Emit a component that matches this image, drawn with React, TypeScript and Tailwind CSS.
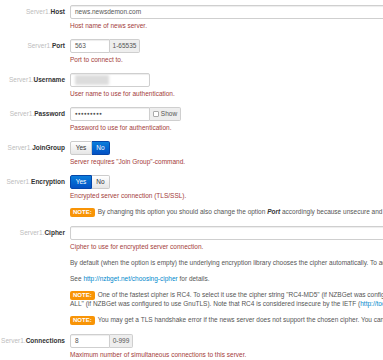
import React from "react";

const help = "mt-[3px] leading-[8px] text-[#a33c3a] whitespace-nowrap";
const desc = "mt-[8px] leading-[8px] text-[#555] whitespace-nowrap";
const box =
  "h-[14px] border border-[#cfcfcf] bg-white shadow-[inset_0_1px_1px_rgba(0,0,0,0.075)] flex items-center px-[4px] text-[#555]";
const addon =
  "h-[14px] border border-l-0 border-[#cfcfcf] bg-[#eeeeee] rounded-r-[2px] flex items-center justify-center text-[#555]";

function Row({ name, children }: { name: string; children: React.ReactNode }) {
  return (
    <div className="flex mb-[9px]">
      <div className="w-[65px] shrink-0 h-[14px] flex items-center justify-end whitespace-nowrap">
        <span className="text-[#bcbcbc]">Server1.</span>
        <span className="font-bold text-[#333]">{name}</span>
      </div>
      <div className="ml-[5px] flex flex-col items-start">{children}</div>
    </div>
  );
}

function Note() {
  return (
    <span className="inline-block bg-[#f89406] text-white font-bold rounded-[2px] px-[3px] h-[9px] leading-[9px] text-[6px] mr-[3px] align-middle relative -top-[0.5px]">
      NOTE:
    </span>
  );
}

function Switch({ yes }: { yes: boolean }) {
  const on = "bg-linear-to-b from-[#0b7ddb] to-[#0551c4] text-white border-[#0546a8]";
  const off = "bg-linear-to-b from-white to-[#e6e6e6] text-[#333] border-[#cccccc]";
  return (
    <div className="flex h-[14px]">
      <div
        className={`w-[22px] h-full border rounded-l-[2px] flex items-center justify-center ${yes ? on : off}`}
      >
        Yes
      </div>
      <div
        className={`w-[18px] h-full border border-l-0 rounded-r-[2px] flex items-center justify-center ${yes ? off : on}`}
      >
        No
      </div>
    </div>
  );
}

export default function App() {
  return (
    <div className="w-[383px] h-[360px] overflow-hidden bg-white font-['Liberation_Sans',Arial,sans-serif] text-[6.5px] pt-[5px]">
      <Row name="Host">
        <div className={`${box} w-[400px] rounded-[2px]`}>news.newsdemon.com</div>
        <p className={help}>Host name of news server.</p>
      </Row>

      <Row name="Port">
        <div className="flex">
          <div className={`${box} w-[40px] rounded-l-[2px]`}>563</div>
          <div className={`${addon} w-[30px]`}>1-65535</div>
        </div>
        <p className={help}>Port to connect to.</p>
      </Row>

      <Row name="Username">
        <div className={`${box} w-[80px] rounded-[2px]`}>
          <div className="w-[34px] h-[10px] bg-[#dcdcdc] blur-[1.5px]" />
        </div>
        <p className={help}>User name to use for authentication.</p>
      </Row>

      <Row name="Password">
        <div className="flex">
          <div className={`${box} w-[80px] rounded-l-[2px] text-[#444]`}>
            <span className="text-[4.5px] tracking-[0.3px]">●●●●●●●●●</span>
          </div>
          <div className={`${addon} w-[31px] gap-[2px]`}>
            <span className="w-[6px] h-[6px] border border-[#aaa] bg-white rounded-[1px]" />
            Show
          </div>
        </div>
        <p className={help}>Password to use for authentication.</p>
      </Row>

      <Row name="JoinGroup">
        <Switch yes={false} />
        <p className={help}>Server requires "Join Group"-command.</p>
      </Row>

      <Row name="Encryption">
        <Switch yes={true} />
        <p className={help}>Encrypted server connection (TLS/SSL).</p>
        <p className={desc}>
          <Note />
          By changing this option you should also change the option{" "}
          <b className="italic text-[#333]">Port</b> accordingly because unsecure and encrypted
          connections use different ports.
        </p>
      </Row>

      <Row name="Cipher">
        <div className={`${box} w-[400px] rounded-[2px]`} />
        <p className={help}>Cipher to use for encrypted server connection.</p>
        <p className={desc}>
          By default (when the option is empty) the underlying encryption library chooses the
          cipher automatically. To achieve the best performance however you can manually select a
          faster cipher.
        </p>
        <p className={desc}>
          See <span className="text-[#0088cc]">http://nzbget.net/choosing-cipher</span> for
          details.
        </p>
        <p className={desc}>
          <Note />
          One of the fastest cipher is RC4. To select it use the cipher string "RC4-MD5" (if NZBGet
          was configured to use OpenSSL) or "NONE:+VERS-TLS-ALL:+ARCFOUR-128:+RSA:+MAC-ALL:+COMP-
          <br />
          ALL" (if NZBGet was configured to use GnuTLS). Note that RC4 is considered insecure by the
          IETF (<span className="text-[#0088cc]">http://tools.ietf.org/html/rfc7465</span>).
        </p>
        <p className={desc}>
          <Note />
          You may get a TLS handshake error if the news server does not support the chosen cipher.
          You can also set the cipher to empty value.
        </p>
      </Row>

      <Row name="Connections">
        <div className="flex">
          <div className={`${box} w-[40px] rounded-l-[2px]`}>8</div>
          <div className={`${addon} w-[23px]`}>0-999</div>
        </div>
        <p className={help}>Maximum number of simultaneous connections to this server.</p>
      </Row>
    </div>
  );
}
